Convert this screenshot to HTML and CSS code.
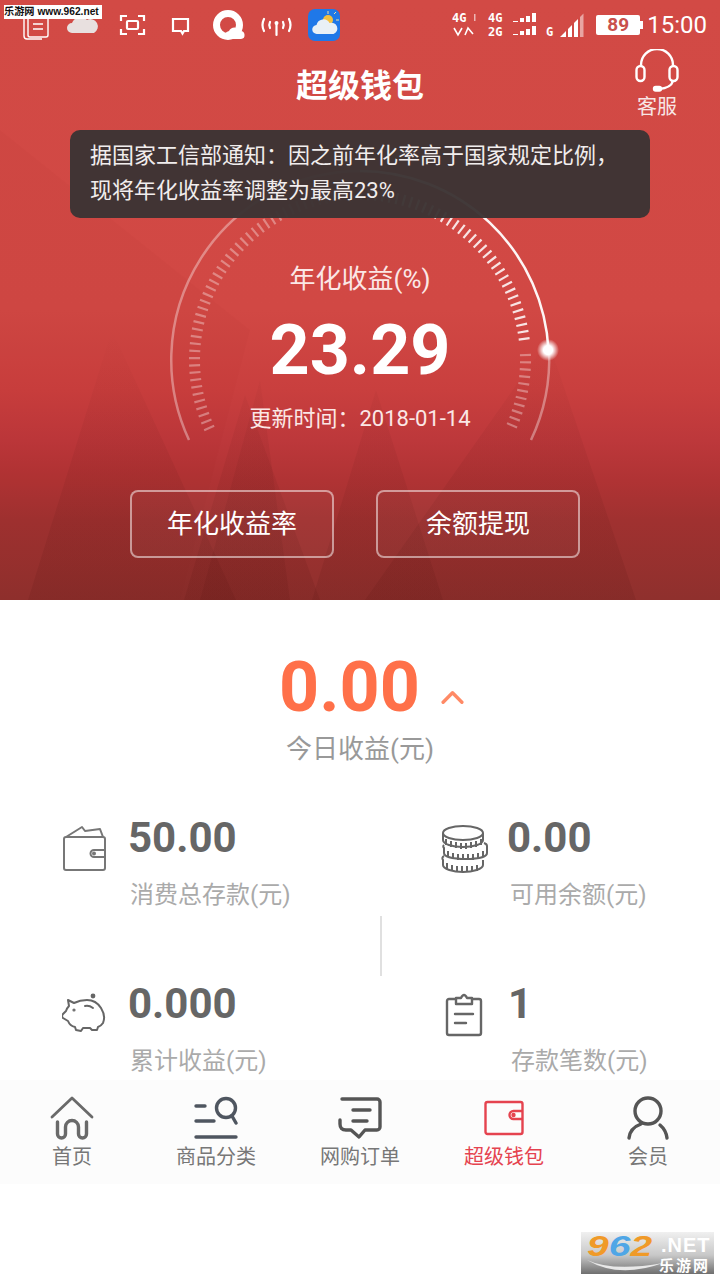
FILE: index.html
```html
<!DOCTYPE html>
<html lang="zh-CN">
<head>
<meta charset="utf-8">
<title>超级钱包</title>
<link rel="stylesheet" href="styles.css">
</head>
<body>
<div class="page">
  <section class="hero">
    <svg class="hero-bg" viewBox="0 0 720 600" width="720" height="600" aria-hidden="true">
      <defs>
        <linearGradient id="shade" gradientUnits="userSpaceOnUse" x1="0" y1="330" x2="0" y2="600">
          <stop offset="0" stop-color="#5a1512" stop-opacity="0"/>
          <stop offset=".35" stop-color="#5a1512" stop-opacity=".07"/>
          <stop offset="1" stop-color="#5a1512" stop-opacity=".16"/>
        </linearGradient>
      </defs>
      <polygon class="sheet" points="0,130 250,330 180,600 0,600"/>
      <polygon class="tri" points="28,600 112,330 236,600"/>
      <polygon class="tri" points="184,600 245,395 320,600"/>
      <polygon class="tri" points="200,600 260,380 290,600"/>
      <polygon class="tri" points="312,600 376,390 443,600"/>
      <polygon class="tri" points="365,600 548,340 636,600"/>
    </svg>

    <svg class="gauge" viewBox="0 0 420 320" width="420" height="320" aria-hidden="true">
      <defs>
        <radialGradient id="glow">
          <stop offset="0" stop-color="#fff"/>
          <stop offset=".42" stop-color="#fff"/>
          <stop offset="1" stop-color="#fff" stop-opacity="0"/>
        </radialGradient>
      </defs>
      <path class="ring dim" d="M39 290 A189 189 0 0 1 210 21"/>
      <path class="ring dim" d="M399 200 A189 189 0 0 1 381 290"/>
      <path class="ring bright" d="M210 21 A189 189 0 0 1 398.500 200"/>
      <path class="ticks faint" d="M59.600 279 A165.500 165.500 0 0 1 210 44.500"/>
      <path class="ticks strong" d="M210 44.500 A165.500 165.500 0 0 1 374.800 195"/>
      <path class="ticks faint" d="M375.400 204 A165.500 165.500 0 0 1 360.400 279"/>
      <circle cx="398" cy="200" r="11" fill="url(#glow)"/>
    </svg>

    <div class="status">
      <svg class="status-left" viewBox="0 0 345 50" width="345" height="50" aria-hidden="true">
        <g fill="none" stroke="#fff" stroke-width="1.400">
          <path d="M28 15h20v20a2 2 0 0 1-2 2H30a2 2 0 0 1-2-2z"/>
          <path d="M24 19v17a3 3 0 0 0 3 3h15"/>
          <path d="M33 24h10M33 29h10"/>
        </g>
        <path fill="#e8e0df" d="M72 33a5 5 0 0 1 0-10 9 9 0 0 1 15-3 6.500 6.500 0 0 1 7 13z"/>
        <g fill="none" stroke="#fff" stroke-width="2.200">
          <path d="M121 21v-5h6M138 16h6v5M144 29v5h-6M127 34h-6v-5"/>
          <rect x="127" y="21" width="11" height="8" rx="1"/>
          <path d="M173 19h15v12h-4l-1.500 2.500L181 31h-8z"/>
        </g>
        <circle cx="228" cy="25" r="11.500" fill="none" stroke="#fff" stroke-width="7"/>
        <path fill="#fff" d="M226 39a5 5 0 0 1 3-8 6 6 0 0 1 11 0 4 4 0 0 1 1 8z"/>
        <g fill="none" stroke="#fff" stroke-width="2.200" stroke-linecap="round">
          <path d="M264 19q-3 6 0 12M289 19q3 6 0 12M270 22q-1.500 3 0 6M283 22q1.500 3 0 6"/>
          <path d="M276.500 24v11"/>
        </g>
        <circle cx="276.500" cy="23" r="2" fill="#fff"/>
        <rect x="308" y="9" width="32" height="32" rx="7" fill="#1f78e8"/>
        <circle cx="328" cy="20" r="5" fill="#f5c040"/>
        <path d="M328 11v3M336 20h3M334 14l2-2M336 27l-2-2" stroke="#f5e0a0" stroke-width="1"/>
        <path fill="#e9f0f6" d="M317 34a4.500 4.500 0 0 1-.5-9 7 7 0 0 1 13-2 5.500 5.500 0 0 1 4 11z"/>
      </svg>
      <div class="status-right">
        <svg class="net" viewBox="0 0 142 40" width="142" height="40" aria-hidden="true">
          <text class="net-text" x="0" y="17">4G</text>
          <path d="M2 23l4 7 4-7M13 30l3-7 5 6" fill="none" stroke="#fff" stroke-width="1.600"/>
          <rect x="22" y="9" width="1.500" height="7" fill="#fff" opacity=".6"/>
          <text class="net-text" x="36" y="17">4G</text>
          <text class="net-text" x="36" y="31">2G</text>
          <path fill="#fff" d="M61 17h5v-1h-5zM68 17h4v-4h-4zM74 17h4v-6h-4zM80 17h4V8h-4zM61 30h5v-1h-5zM68 30h4v-4h-4zM74 30h4v-6h-4zM80 30h4v-9h-4z"/>
          <text class="net-text" x="94" y="31">G</text>
          <path fill="#fff" d="M108 32l6-6v6zM116 24l4-4v12h-4zM122 18l4-4v18h-4z"/>
          <path fill="#fff" opacity=".5" d="M128 12l3.500-3.500V32H128z"/>
        </svg>
        <div class="battery"><span class="battery-level">89</span></div>
        <span class="clock">15:00</span>
      </div>
    </div>

    <header class="topbar">
      <h1 class="title">超级钱包</h1>
      <div class="service">
        <svg viewBox="0 0 44 44" width="44" height="44" fill="none" stroke="#fff" stroke-width="2.400" aria-hidden="true">
          <path d="M6 17v-1a16 16 0 0 1 32 0v1"/>
          <rect x="1.500" y="17" width="8" height="15" rx="4"/>
          <rect x="34.500" y="17" width="8" height="15" rx="4"/>
          <path d="M38 32q-2 7-14 8"/>
          <rect x="19" y="38" width="7" height="3.500" rx="1.700" fill="#fff"/>
        </svg>
        <span class="service-label">客服</span>
      </div>
    </header>

    <div class="notice">据国家工信部通知：因之前年化率高于国家规定比例，<br>现将年化收益率调整为最高23%</div>

    <div class="rate">
      <div class="rate-label">年化收益(%)</div>
      <div class="rate-value">23.29</div>
      <div class="rate-time">更新时间：<span class="num">2018-01-14</span></div>
    </div>

    <div class="actions">
      <button class="action">年化收益率</button>
      <button class="action">余额提现</button>
    </div>
  </section>

  <section class="today">
    <div class="today-row">
      <span class="today-value">0.00</span>
      <svg class="chevron" viewBox="0 0 24 16" width="23" height="15" fill="none" stroke="#ff8a66" stroke-width="3.600" stroke-linecap="round" stroke-linejoin="round" aria-hidden="true"><path d="M2 13l10-10 10 10"/></svg>
    </div>
    <div class="today-label">今日收益(元)</div>
  </section>

  <section class="stats">
    <div class="stat">
      <div class="stat-icon icon-wallet">
        <svg viewBox="0 0 44 48" width="44" height="48" fill="none" stroke="#777" stroke-width="2" stroke-linejoin="round" aria-hidden="true">
          <path d="M4 12a2 2 0 0 0-2 2v29a2 2 0 0 0 2 2h37a2 2 0 0 0 2-2V14a2 2 0 0 0-2-2z"/>
          <path d="M4 12L20 2l3 4 15-2 3 8"/>
          <path d="M43 25h-11a3.500 3.500 0 0 0 0 7h11"/>
          <circle cx="32" cy="28.500" r="1" fill="#777"/>
        </svg>
      </div>
      <div class="stat-text"><div class="stat-value">50.00</div><div class="stat-label">消费总存款(元)</div></div>
    </div>
    <div class="stat">
      <div class="stat-icon icon-coins">
        <svg viewBox="0 0 48 48" width="48" height="48" fill="none" stroke="#666" stroke-width="2" aria-hidden="true">
          <ellipse cx="22" cy="8" rx="20" ry="7"/>
          <path d="M2 8v7c0 4 9 7 20 7s20-3 20-7V8"/>
          <path d="M5 14v6M10 16v6M15 17v6M20 18v6M25 18v6M30 17v6M35 16v6M40 14v6"/>
          <path d="M3 20c-1 1-1 2 0 3v5c0 4 10 6 22 6s21-2 21-6v-7q0-2-3-3"/>
          <path d="M7 26v6M12 28v6M17 29v6M22 29v6M27 29v6M32 29v6M37 28v6M42 26v6"/>
          <path d="M3 31c-2 1-2 3-1 4v5c0 4 10 7 20 7s20-3 20-7v-5"/>
          <path d="M6 38v6M11 40v6M16 41v6M21 41v6M26 41v6M31 41v6M36 40v6"/>
        </svg>
      </div>
      <div class="stat-text"><div class="stat-value">0.00</div><div class="stat-label">可用余额(元)</div></div>
    </div>
    <div class="stat">
      <div class="stat-icon icon-pig">
        <svg viewBox="0 0 44 42" width="44" height="42" fill="none" stroke="#666" stroke-width="2" stroke-linecap="round" stroke-linejoin="round" aria-hidden="true">
          <path d="M6 8l6 3q6-3 13-3 9 0 14 8t2 15q-2 3-5 4l-1 3h-5l-2-2h-7l-2 3-5-1-1-3q-5-1-7-6l-5-3q-2-2 0-4l3-3q1-3 3-5z"/>
          <path d="M23 14q4-1 8 2"/>
          <circle cx="12" cy="18" r=".6" fill="#666"/>
          <circle cx="31" cy="4" r="2.400" fill="#666" stroke="none"/>
        </svg>
      </div>
      <div class="stat-text"><div class="stat-value">0.000</div><div class="stat-label">累计收益(元)</div></div>
    </div>
    <div class="stat">
      <div class="stat-icon icon-clip">
        <svg viewBox="0 0 40 46" width="40" height="46" fill="none" stroke="#666" stroke-width="2.400" stroke-linecap="round" stroke-linejoin="round" aria-hidden="true">
          <path d="M11 8H4a2 2 0 0 0-2 2v32a2 2 0 0 0 2 2h30a2 2 0 0 0 2-2V10a2 2 0 0 0-2-2h-7"/>
          <path d="M11 13V7h5q3-6 6 0h5v6z"/>
          <path d="M10 23h18M10 32h11"/>
        </svg>
      </div>
      <div class="stat-text"><div class="stat-value">1</div><div class="stat-label">存款笔数(元)</div></div>
    </div>
    <div class="stats-divider"></div>
  </section>

  <nav class="tabs">
    <div class="tab">
      <svg viewBox="0 0 44 44" width="44" height="44" fill="none" stroke="#6a6a6a" stroke-width="2.800" stroke-linecap="round" stroke-linejoin="round" aria-hidden="true">
        <path d="M2 21L22 2l20 19"/>
        <path d="M7.500 26v12a4 4 0 0 0 8 0V31a6.500 6.500 0 0 1 13 0v7a4 4 0 0 0 8 0V26" stroke-width="3.400"/>
      </svg>
      <span class="tab-label">首页</span>
    </div>
    <div class="tab">
      <svg viewBox="0 0 44 44" width="44" height="44" fill="none" stroke="#4f5660" stroke-width="3.400" stroke-linecap="round" aria-hidden="true">
        <path d="M2 10h9M2 25h18M2 41h40"/>
        <circle cx="32" cy="12" r="9.500"/>
        <path d="M38 20l4 7"/>
      </svg>
      <span class="tab-label">商品分类</span>
    </div>
    <div class="tab">
      <svg viewBox="0 0 44 44" width="44" height="44" fill="none" stroke="#555" stroke-width="3.400" stroke-linecap="round" stroke-linejoin="round" aria-hidden="true">
        <path d="M4 3h35a3 3 0 0 1 3 3v25a3 3 0 0 1-3 3H27l-6 7-8-7H8q-6 0-6-6V24"/>
        <path d="M15 14h17M15 25h14"/>
      </svg>
      <span class="tab-label">网购订单</span>
    </div>
    <div class="tab tab-active">
      <svg viewBox="0 0 44 44" width="44" height="44" fill="none" stroke="#e5434f" stroke-width="2.400" stroke-linejoin="round" aria-hidden="true">
        <rect x="3.500" y="6" width="37" height="32" rx="2"/>
        <path d="M40.500 15h-9a4 4 0 0 0 0 8h9"/>
        <circle cx="31.500" cy="19" r="1" fill="#e5434f"/>
      </svg>
      <span class="tab-label">超级钱包</span>
    </div>
    <div class="tab">
      <svg viewBox="0 0 44 44" width="44" height="44" fill="none" stroke="#555" stroke-width="3.400" stroke-linecap="round" aria-hidden="true">
        <circle cx="22" cy="15" r="13"/>
        <path d="M3 42q1-10 12-14M41 42q-1-8-7-13"/>
      </svg>
      <span class="tab-label">会员</span>
    </div>
  </nav>
</div>

<div class="wm-top">乐游网 www.962.net</div>
<div class="wm-logo">
  <span class="wm-num"><span class="wm-o">9</span><span class="wm-b">6</span><span class="wm-o">2</span></span>
  <span class="wm-net">.NET</span>
  <svg class="wm-swoosh" viewBox="0 0 76 14" width="76" height="14" aria-hidden="true"><path d="M0 2q26 12 76 3-44 16-76-3z" fill="#e8e8e8"/></svg>
  <span class="wm-cn">乐游网</span>
</div>
</body>
</html>
```

FILE: styles.css
```css
* { box-sizing: border-box; margin: 0; padding: 0; }

html, body {
  width: 720px;
  height: 1280px;
  overflow: hidden;
  background: #fff;
}

body {
  position: relative;
  font-family: Roboto, "Noto Sans CJK SC", sans-serif;
  color: #666;
}

.page { width: 720px; }

/* hero */
.hero {
  position: relative;
  height: 600px;
  overflow: hidden;
  background: linear-gradient(180deg,
    #d24a45 0,
    #d14844 310px,
    #c93f3e 390px,
    #bd383b 440px,
    #b03334 480px,
    #a03130 520px,
    #8f302d 600px);
}

.hero-bg { position: absolute; left: 0; top: 0; }
.tri { fill: url(#shade); }
.sheet { fill: #5a1512; opacity: .02; }

.gauge { position: absolute; left: 150px; top: 150px; }
.ring { fill: none; stroke-width: 2.500; }
.ring.dim { stroke: rgba(255, 255, 255, .36); }
.ring.bright { stroke: #fff; stroke-opacity: .95; }
.ticks { fill: none; stroke-width: 11; stroke-dasharray: 2.200 5; }
.ticks.faint { stroke: rgba(255, 255, 255, .34); }
.ticks.strong { stroke: rgba(255, 255, 255, .85); }

/* status bar */
.status {
  position: relative;
  display: flex;
  justify-content: space-between;
  height: 50px;
  padding-right: 13px;
}
.status-left { display: block; }
.status-right { display: flex; align-items: center; }
.net { display: block; margin-right: 2px; }
.net-text {
  font-family: "DejaVu Sans Mono", monospace;
  font-size: 12px;
  font-weight: 700;
  fill: #fff;
}
.battery {
  position: relative;
  width: 44px;
  height: 20px;
  margin-right: 7px;
  border-radius: 2px;
  background: #fff;
}
.battery::after {
  content: "";
  position: absolute;
  right: -3px;
  top: 6px;
  width: 3px;
  height: 8px;
  background: #fff;
}
.battery-level {
  display: block;
  font-size: 19px;
  font-weight: 700;
  line-height: 20px;
  color: #c9504c;
  text-align: center;
}
.clock { font-size: 24px; line-height: 28px; color: #fff; }

/* header */
.topbar {
  position: relative;
  display: flex;
  justify-content: center;
  height: 70px;
}
.title {
  font-size: 32px;
  font-weight: 700;
  line-height: 72px;
  color: #fff;
}
.service {
  position: absolute;
  right: 41px;
  top: -1px;
  display: flex;
  flex-direction: column;
  align-items: center;
  color: #fff;
}
.service svg { display: block; }
.service-label {
  margin-top: 1px;
  font-size: 20px;
  line-height: 26px;
  color: #f8e6e5;
}

.notice {
  position: absolute;
  left: 70px;
  top: 130px;
  width: 580px;
  height: 88px;
  padding: 8px 20px;
  border-radius: 10px;
  background: rgba(60, 52, 52, .97);
  font-size: 22px;
  line-height: 35px;
  color: #f1eded;
}

.rate {
  position: relative;
  margin-top: 139px;
  text-align: center;
  color: #fff;
}
.rate-label { font-size: 26px; line-height: 40px; color: #fbe7e6; }
.rate-value {
  font-size: 70px;
  font-weight: 700;
  line-height: 80px;
  margin-top: 11px;
}
.rate-time { margin-top: 9px; font-size: 22px; line-height: 40px; color: #fbe7e6; }

.actions {
  position: relative;
  display: flex;
  gap: 42px;
  margin-top: 51px;
  padding-left: 130px;
}
.action {
  width: 204px;
  height: 68px;
  padding-bottom: 5px;
  border: 2px solid rgba(255, 255, 255, .5);
  border-radius: 8px;
  background: rgba(255, 255, 255, .03);
  font-family: "Noto Sans CJK SC", sans-serif;
  font-size: 26px;
  color: #fff;
}

/* today */
.today { padding-top: 47px; }
.today-row {
  display: flex;
  align-items: flex-start;
  padding-left: 279px;
  height: 80px;
}
.today-value {
  font-size: 70px;
  font-weight: 700;
  line-height: 80px;
  color: #ff7049;
}
.chevron { margin: 43px 0 0 21px; }
.today-label {
  margin-top: 2px;
  font-size: 26px;
  line-height: 40px;
  text-align: center;
  color: #999;
}

/* stats */
.stats {
  position: relative;
  display: grid;
  grid-template-columns: 380px 1fr;
  row-gap: 68px;
  margin-top: 46px;
  padding-left: 62px;
}
.stat { display: flex; }
.stat-icon { width: 67px; flex: none; padding-top: 10px; }
.stat-icon svg { display: block; }
.icon-coins { margin-left: -1px; }
.icon-pig { padding-top: 11px; }
.icon-clip { padding: 10px 0 0 3px; }
.stat-value {
  margin-left: -1px;
  padding-top: 1px;
  font-size: 42px;
  font-weight: 700;
  line-height: 44px;
  color: #666;
}
.stat-label {
  margin: 17px 0 0 1px;
  font-size: 24px;
  line-height: 36px;
  color: #aaa;
}
.stat:nth-child(even) .stat-label { margin-left: 2px; }
.stats-divider {
  position: absolute;
  left: 380px;
  top: 101px;
  width: 2px;
  height: 60px;
  background: #e0e0e0;
}

/* tabs */
.tabs {
  display: grid;
  grid-template-columns: repeat(5, 144px);
  height: 104px;
  margin-top: 1px;
  padding-top: 16px;
  background: #fcfcfc;
}
.tab {
  display: flex;
  flex-direction: column;
  align-items: center;
  color: #777;
}
.tab svg { display: block; margin-bottom: 4px; }
.tab-label {
  display: block;
  font-size: 20px;
  line-height: 26px;
}
.tab-active { color: #e5434f; }

/* watermarks */
.wm-top {
  position: absolute;
  left: 4px;
  top: 5px;
  width: 98px;
  height: 14px;
  background: #fff;
  font-family: "Liberation Sans", "Noto Sans CJK SC", sans-serif;
  font-size: 10.200px;
  font-weight: 700;
  line-height: 14px;
  white-space: nowrap;
  color: #111;
}
.wm-logo {
  position: absolute;
  left: 581px;
  top: 1232px;
  width: 133px;
  height: 42px;
  background: linear-gradient(180deg, #f0f0f0 0, #c8c8c8 55%, #6f6f6f 100%);
  font-family: "Liberation Sans", sans-serif;
}
.wm-num {
  position: absolute;
  left: 6px;
  top: 0;
  font-size: 30px;
  font-style: italic;
  font-weight: 700;
  line-height: 28px;
  transform: scaleX(1.300);
  transform-origin: left top;
}
.wm-o { color: #f09a28; }
.wm-b { color: #4fa6e6; }
.wm-swoosh { position: absolute; left: 6px; top: 26px; }
.wm-net {
  position: absolute;
  left: 80px;
  top: 4px;
  font-size: 20px;
  font-weight: 700;
  line-height: 18px;
  letter-spacing: 1px;
  color: #fff;
}
.wm-cn {
  position: absolute;
  left: 78px;
  top: 24px;
  font-family: "Noto Sans CJK SC", sans-serif;
  font-size: 15px;
  font-weight: 700;
  line-height: 17px;
  letter-spacing: 2px;
  color: #fff;
}
```
